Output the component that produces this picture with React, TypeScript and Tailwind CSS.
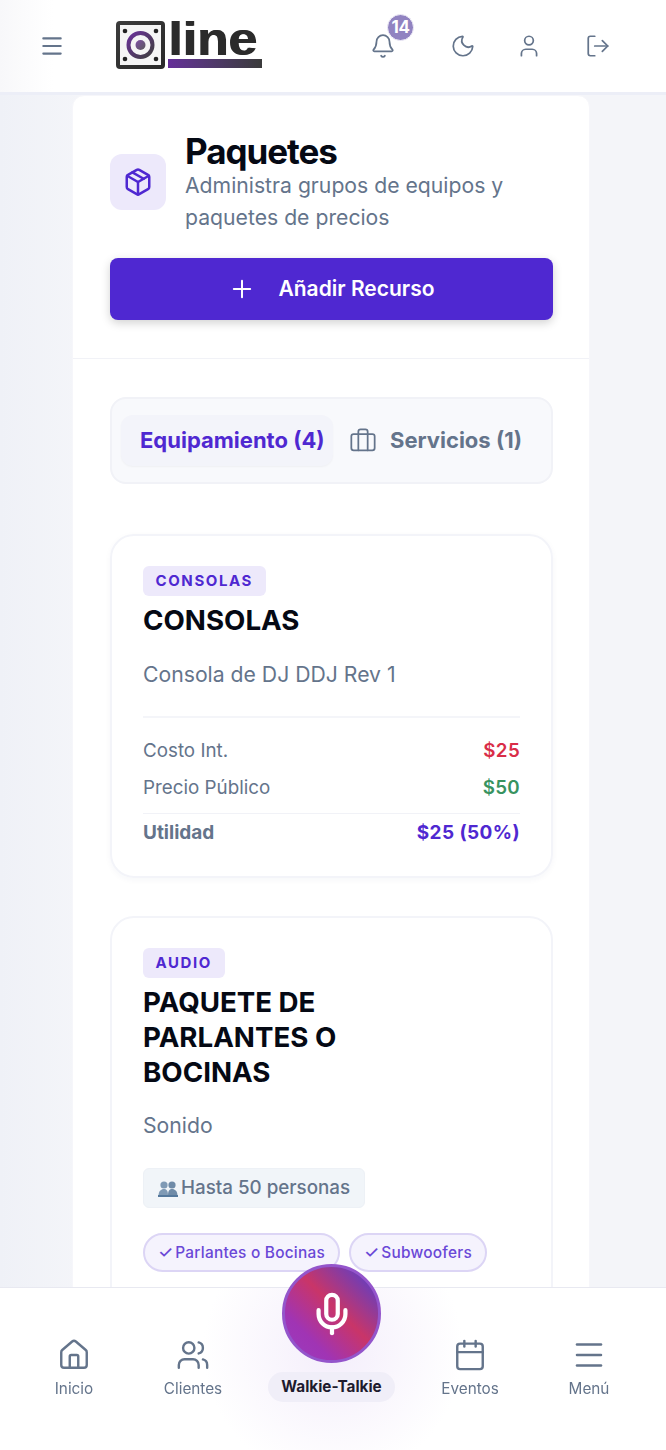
import React from 'react';
import { Bell, Moon, User, LogOut, Menu, Package, Plus, Briefcase, Home, Users, Mic, Calendar } from 'lucide-react';

function Logo() {
  return (
    <div className="flex items-start gap-[3px] h-[48px]">
      <svg width="49" height="48" viewBox="0 0 49 48">
        <defs>
          <linearGradient id="ring" x1="0" y1="0" x2="1" y2="1">
            <stop offset="0" stopColor="#6a3299" />
            <stop offset="1" stopColor="#3f3f3f" />
          </linearGradient>
          <linearGradient id="frame" x1="0" y1="0" x2="1" y2="1">
            <stop offset="0" stopColor="#3b3b3b" />
            <stop offset="1" stopColor="#2a2a2a" />
          </linearGradient>
        </defs>
        <rect x="2" y="2" width="45" height="44" rx="2" fill="#f5f5f5" stroke="url(#frame)" strokeWidth="4" />
        <circle cx="24.500" cy="24" r="12" fill="none" stroke="url(#ring)" strokeWidth="4" />
        <circle cx="24.500" cy="24" r="5" fill="url(#ring)" opacity="0.85" />
        <circle cx="9" cy="10" r="2.300" fill="#222" />
        <circle cx="40" cy="10" r="2.300" fill="#222" />
        <circle cx="9" cy="38" r="2.300" fill="#222" />
        <circle cx="40" cy="38" r="2.300" fill="#222" />
      </svg>
      <div className="flex flex-col w-[94px]">
        <span className="font-['Liberation_Sans',sans-serif] font-bold text-[46px] leading-[37px] h-[35px] origin-left [transform:scaleX(1.12)] text-[#2b2b2b] [text-shadow:1px_0_0_#2b2b2b]">line</span>
        <div className="h-[9px] mt-[3px] bg-gradient-to-r from-[#652e99] to-[#3a3a3a]" />
      </div>
    </div>
  );
}

function Header() {
  return (
    <header className="h-[95px] shrink-0 bg-[linear-gradient(90deg,#f8f8fa,#ffffff_8%)] border-b-[3px] border-[#eceef7] flex items-center pl-[39px]">
      <Menu size={26} strokeWidth={2} className="text-[#64748b]" />
      <div className="ml-[51px] mt-[-2px]">
        <Logo />
      </div>
      <div className="relative ml-[108px]">
        <Bell size={26} strokeWidth={1.6} className="text-[#64748b]" />
        <span className="absolute -top-[19px] left-[17px] w-[27px] h-[27px] rounded-full bg-[#9183c1] text-white text-[17px] font-bold tracking-[-0.5px] flex items-center justify-center border border-[#f0eef8]">14</span>
      </div>
      <Moon size={26} strokeWidth={1.6} className="ml-[54px] text-[#64748b]" />
      <User size={26} strokeWidth={1.6} className="ml-[40px] text-[#64748b]" />
      <LogOut size={26} strokeWidth={1.6} className="ml-[43px] text-[#64748b]" />
    </header>
  );
}

function Row({ label, value, color }: { label: string; value: string; color: string }) {
  return (
    <div className="flex justify-between items-center h-[37px]">
      <span className="text-[18.800px] text-[#64748b]">{label}</span>
      <span className={`text-[18.800px] font-semibold tracking-[0.3px] ${color}`}>{value}</span>
    </div>
  );
}

function Badge({ children }: { children: React.ReactNode }) {
  return (
    <span className="inline-flex h-[30px] items-center px-[12.500px] rounded-md bg-[#ede9fb] text-[#4f28d1] text-[15px] font-bold tracking-[1.600px]">
      {children}
    </span>
  );
}

function TwoPeople() {
  return (
    <svg width="20" height="18" viewBox="0 0 20 18" className="shrink-0">
      <circle cx="6" cy="6" r="3.600" fill="#7f9ab5" />
      <circle cx="14" cy="6" r="3.600" fill="#6f8ba8" />
      <path d="M0.500 17c0-5 2.500-7 5.500-7s4 2 4 7z" fill="#7f9ab5" />
      <path d="M10 17c0-5 1-7 4-7s5.500 2 5.500 7z" fill="#6f8ba8" />
      <rect x="0" y="16" width="20" height="2" fill="#54789c" />
    </svg>
  );
}

function Chip({ children }: { children: React.ReactNode }) {
  return (
    <span className="inline-flex items-center h-[39px] px-[13px] gap-[2px] rounded-full bg-[#f5f3fd] border-2 border-[#dcd5f5] text-[#6a48d7] text-[15.400px] font-medium tracking-[0.250px] whitespace-nowrap">
      <span className="text-[17px]">✓</span>
      {children}
    </span>
  );
}

function NavItem({ icon, label }: { icon: React.ReactNode; label: string }) {
  return (
    <div className="flex flex-col items-center text-[#64748b]">
      {icon}
      <span className="text-[15.300px] mt-[6px] leading-[22px]">{label}</span>
    </div>
  );
}

function BottomNav() {
  return (
    <nav className="fixed bottom-0 left-0 right-0 h-[163px] bg-[radial-gradient(circle_130px_at_50%_62px,#f4eefb,#ffffff)] border-t border-[#e8e9f1] grid grid-cols-[119px_119px_158px_119px_119px] pl-[14.500px] pt-[50px]">
      <NavItem icon={<Home size={34} strokeWidth={1.7} />} label="Inicio" />
      <NavItem icon={<Users size={34} strokeWidth={1.7} />} label="Clientes" />
      <div className="flex flex-col items-center -mt-[74px]">
        <div className="w-[99px] h-[99px] shrink-0 rounded-full border-[3px] border-[#9455cb] bg-[linear-gradient(225deg,#5f3fc4_8%,#c93568_45%,#a034b4_75%,#9a3cc0)] flex items-center justify-center">
          <Mic size={46} strokeWidth={2.2} className="text-white" />
        </div>
        <span className="mt-[9px] h-[30px] w-[127px] shrink-0 rounded-full bg-[#f0eef8] text-[#1e1b2e] text-[15.300px] font-bold flex items-center justify-center">Walkie-Talkie</span>
      </div>
      <NavItem icon={<Calendar size={34} strokeWidth={1.7} />} label="Eventos" />
      <NavItem icon={<Menu size={36} strokeWidth={1.7} className="-my-[1px]" />} label="Menú" />
    </nav>
  );
}

export default function App() {
  return (
    <div className="h-screen overflow-hidden flex flex-col font-['Inter',sans-serif] bg-[linear-gradient(90deg,#eff1f7,#f4f5f9_12%)]">
      <Header />
      <main className="flex-1 mx-[72px] w-[518px] bg-white border border-[#f6f6fa] rounded-t-xl">
        <section className="pl-[37px] pr-[36px] h-[263px] border-b border-[#f1f2f7] flex flex-col">
          <div className="flex items-center gap-[19px] mt-[38px]">
            <div className="w-[56px] h-[56px] -mt-[4px] rounded-xl bg-[#ede9fb] flex items-center justify-center shrink-0">
              <Package size={30} strokeWidth={2} className="text-[#4f28d1]" />
            </div>
            <div>
              <h1 className="text-[35px] leading-[35px] font-bold tracking-[-1.050px] text-[#050914]">Paquetes</h1>
              <p className="text-[21.200px] leading-[32px] text-[#64748b]">Administra grupos de equipos y paquetes de precios</p>
            </div>
          </div>
          <button className="mt-[25px] h-[62px] rounded-lg bg-[#4f28d1] text-white text-[21px] font-semibold flex items-center justify-center gap-[22px] shadow-[0_3px_10px_rgba(0,0,0,0.18)]">
            <Plus size={28} strokeWidth={1.7} />
            Añadir Recurso
          </button>
        </section>
        <section className="pl-[37px] pr-[36px] pt-[38px]">
          <div className="h-[87px] rounded-2xl bg-[#f8f9fc] border-2 border-[#f1f2f7] flex items-center pl-[9px]">
            <div className="h-[51px] w-[212px] rounded-xl bg-[#f3f4fa] shadow-[0_1px_2px_rgba(0,0,0,0.04)] flex items-center pl-[19px] text-[22px] font-bold text-[#4f28d1]">
              Equipamiento (4)
            </div>
            <div className="ml-[16px] flex items-center gap-[13px] text-[22px] font-bold text-[#64748b]">
              <Briefcase size={28} strokeWidth={1.5} />
              Servicios (1)
            </div>
          </div>

          <article className="mt-[50px] h-[344px] rounded-[24px] border-2 border-[#f3f4f9] shadow-[0_2px_6px_rgba(30,40,90,0.04)] px-[31px] pt-[30px]">
            <Badge>CONSOLAS</Badge>
            <h2 className="text-[27.700px] leading-[35px] font-bold text-[#050914] mt-[7px]">CONSOLAS</h2>
            <p className="text-[21.200px] leading-[30px] text-[#64748b] mt-[21px]">Consola de DJ DDJ Rev 1</p>
            <div className="mt-[27px] pt-[15px] border-t-2 border-[#f4f5f9]">
              <Row label="Costo Int." value="$25" color="text-[#d92d48]" />
              <Row label="Precio Público" value="$50" color="text-[#38935f]" />
              <div className="mt-[6px] pt-[3px] border-t border-[#f1f2f7] flex justify-between items-center h-[37px]">
                <span className="text-[19px] font-bold text-[#64748b]">Utilidad</span>
                <span className="text-[19px] font-bold tracking-[0.4px] text-[#4f28d1]">$25 (50%)</span>
              </div>
            </div>
          </article>

          <article className="mt-[38px] h-[500px] rounded-[24px] border-2 border-[#f3f4f9] px-[31px] pt-[30px]">
            <Badge>AUDIO</Badge>
            <h2 className="text-[27.700px] leading-[35px] font-bold text-[#050914] mt-[7px] w-[260px]">PAQUETE DE PARLANTES O BOCINAS</h2>
            <p className="text-[21.200px] leading-[30px] text-[#64748b] mt-[20px]">Sonido</p>
            <div className="mt-[28px] inline-flex items-center h-[40px] px-[14px] gap-[3px] rounded-md bg-[#f1f5f9] border border-[#edf1f6] text-[18.800px] font-medium text-[#64748b]">
              <TwoPeople />
              Hasta 50 personas
            </div>
            <div className="mt-[25px] flex gap-[9px]">
              <Chip>Parlantes o Bocinas</Chip>
              <Chip>Subwoofers</Chip>
            </div>
          </article>
        </section>
      </main>
      <BottomNav />
    </div>
  );
}
